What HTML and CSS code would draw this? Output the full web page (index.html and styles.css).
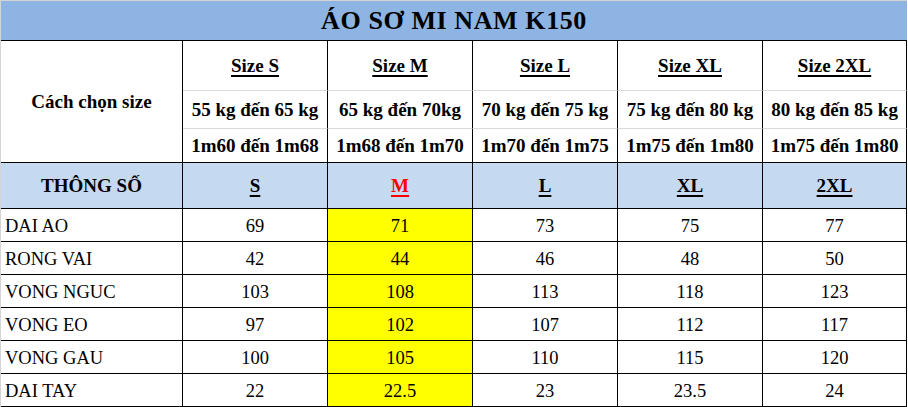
FILE: index.html
```html
<!DOCTYPE html>
<html lang="vi">
<head>
<meta charset="utf-8">
<title>ÁO SƠ MI NAM K150</title>
<link rel="stylesheet" href="styles.css">
</head>
<body>
<table class="sheet">
  <colgroup>
    <col class="c-label">
    <col class="c-size">
    <col class="c-size">
    <col class="c-size">
    <col class="c-size">
    <col class="c-last">
  </colgroup>
  <tbody>
    <tr class="r-title">
      <td class="title" colspan="6">ÁO SƠ MI NAM K150</td>
    </tr>
    <tr class="r-size">
      <td class="guide" rowspan="3">Cách chọn size</td>
      <td class="hd soft"><u>Size S</u></td>
      <td class="hd soft"><u>Size M</u></td>
      <td class="hd soft"><u>Size L</u></td>
      <td class="hd soft"><u>Size XL</u></td>
      <td class="hd soft"><u>Size 2XL</u></td>
    </tr>
    <tr class="r-kg">
      <td class="hd soft">55 kg đến 65 kg</td>
      <td class="hd soft">65 kg đến 70kg</td>
      <td class="hd soft">70 kg đến 75 kg</td>
      <td class="hd soft">75 kg đến 80 kg</td>
      <td class="hd soft">80 kg đến 85 kg</td>
    </tr>
    <tr class="r-h">
      <td class="hd">1m60 đến 1m68</td>
      <td class="hd">1m68 đến 1m70</td>
      <td class="hd">1m70 đến 1m75</td>
      <td class="hd">1m75 đến 1m80</td>
      <td class="hd">1m75 đến 1m80</td>
    </tr>
    <tr class="r-spec">
      <td class="spec">THÔNG SỐ</td>
      <td class="spec"><u>S</u></td>
      <td class="spec red"><u>M</u></td>
      <td class="spec"><u>L</u></td>
      <td class="spec"><u>XL</u></td>
      <td class="spec"><u>2XL</u></td>
    </tr>
    <tr class="r-data">
      <td class="name">DAI AO</td><td class="num">69</td><td class="num hi">71</td><td class="num">73</td><td class="num">75</td><td class="num">77</td>
    </tr>
    <tr class="r-data">
      <td class="name">RONG VAI</td><td class="num">42</td><td class="num hi">44</td><td class="num">46</td><td class="num">48</td><td class="num">50</td>
    </tr>
    <tr class="r-data">
      <td class="name">VONG NGUC</td><td class="num">103</td><td class="num hi">108</td><td class="num">113</td><td class="num">118</td><td class="num">123</td>
    </tr>
    <tr class="r-data">
      <td class="name">VONG EO</td><td class="num">97</td><td class="num hi">102</td><td class="num">107</td><td class="num">112</td><td class="num">117</td>
    </tr>
    <tr class="r-data">
      <td class="name">VONG GAU</td><td class="num">100</td><td class="num hi">105</td><td class="num">110</td><td class="num">115</td><td class="num">120</td>
    </tr>
    <tr class="r-data">
      <td class="name">DAI TAY</td><td class="num">22</td><td class="num hi">22.5</td><td class="num">23</td><td class="num">23.5</td><td class="num">24</td>
    </tr>
  </tbody>
</table>
</body>
</html>
```
FILE: styles.css
```css
html, body {
  margin: 0;
  padding: 0;
  background: #ffffff;
}

.sheet {
  border-collapse: separate;
  border-spacing: 0;
  table-layout: fixed;
  width: 907px;
  border-top: 1px solid #d4d4d4;
  border-left: 1px solid #d4d4d4;
  font-family: "Liberation Serif", "Times New Roman", serif;
  color: #000;
}

.c-label { width: 182px; }
.c-size { width: 145px; }
.c-last { width: 144px; }

.sheet td {
  box-sizing: border-box;
  padding: 0;
  border-right: 1px solid #000;
  border-bottom: 1px solid #000;
  text-align: center;
  vertical-align: middle;
  white-space: nowrap;
  overflow: hidden;
}

.r-title { height: 40px; }
.r-size { height: 50px; }
.r-kg { height: 38px; }
.r-h { height: 34px; }
.r-spec { height: 46px; }
.r-data { height: 33px; }

.sheet td.title {
  background: #8db4e2;
  border-right: none;
  font-size: 26px;
  font-weight: bold;
  letter-spacing: 0.6px;
  padding-top: 1px;
}

.guide {
  font-size: 19px;
  font-weight: bold;
}

.hd {
  font-size: 19px;
  font-weight: bold;
}

.sheet td.soft {
  border-bottom-color: #dadada;
}

.hd u, .spec u {
  text-decoration-thickness: 2px;
  text-underline-offset: 3px;
}

.spec {
  background: #c5d9f1;
  font-size: 19px;
  font-weight: bold;
}

.red {
  color: #ff0000;
}

.name {
  font-size: 18.5px;
  text-align: left !important;
  padding-left: 4px !important;
  padding-top: 2px !important;
}

.num {
  font-size: 18.5px;
  padding-top: 2px !important;
}

.hi {
  background: #ffff00;
}
```
